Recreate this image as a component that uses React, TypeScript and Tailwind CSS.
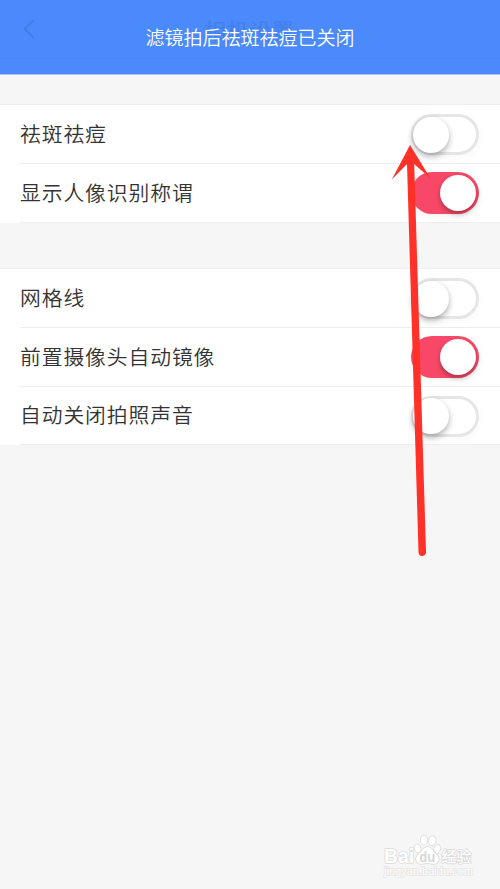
interface SettingRowProps {
  label: string;
  on?: boolean;
}

function Toggle({ on = false }: { on?: boolean }) {
  return (
    <button
      role="switch"
      aria-checked={on}
      className={`flex w-[68px] shrink-0 items-center rounded-full ${
        on
          ? "h-[42px] justify-end bg-[#f74967] pr-[3px] shadow-[0_2px_10px_rgba(0,0,0,0.05)]"
          : "mt-px h-[41px] border-[3px] border-[#e6e6e6] bg-white shadow-[0_2px_10px_rgba(0,0,0,0.03)]"
      }`}
    >
      <span
        className={`size-9 shrink-0 rounded-full bg-white ${
          on ? "shadow-[0_3px_5px_rgba(0,0,0,0.3)]" : "-ml-px shadow-[0_3px_6px_rgba(0,0,0,0.32)]"
        }`}
      />
    </button>
  );
}

function SettingRow({ label, on }: SettingRowProps) {
  return (
    <div className="h-[59px] bg-white pl-5 nth-3:h-[58px]">
      <div className="flex h-full items-center justify-between border-b border-[#ededed] pr-[21px]">
        <span className="-mt-px text-[20.8px] font-[350] tracking-[0.9px] text-[#333]">{label}</span>
        <Toggle on={on} />
      </div>
    </div>
  );
}

function Arrow() {
  return (
    <svg className="absolute left-[385px] top-[140px]" width="50" height="420" viewBox="385 140 50 420">
      <path
        d="M410 145 L430.5 178.5 L414.2 164 L426 551.5 C426.2 554 424.5 556 422 556 C419.8 556 418.7 554.5 418.5 552 L407 164 L391.8 179.5 Z"
        fill="#ff3128"
      />
    </svg>
  );
}

function Watermark() {
  return (
    <div className="absolute left-[380px] top-[832px] w-[98px]">
      <svg width="98" height="48" viewBox="380 832 98 48" fontFamily="'Liberation Sans', 'Noto Sans CJK SC', sans-serif">
        <g fill="#fff" stroke="#dadada" strokeWidth="1.6" paintOrder="stroke" strokeLinejoin="round">
          <text x="384" y="863" fontSize="20.5" fontWeight="700" textLength="30" lengthAdjust="spacingAndGlyphs">
            Bai
          </text>
          <ellipse cx="417.8" cy="848.5" rx="2.8" ry="4" transform="rotate(-12 417.8 848.5)" />
          <ellipse cx="424" cy="840.2" rx="3.3" ry="4.5" />
          <ellipse cx="432.3" cy="840.8" rx="3.3" ry="4.5" transform="rotate(12 432.3 840.8)" />
          <ellipse cx="437.2" cy="848.9" rx="3" ry="4" transform="rotate(18 437.2 848.9)" />
          <path d="M427.3 847c-4 0-5.2 3.8-8 6.4-2.9 2.4-3.7 4.5-3 7.2 1 3.7 4.5 3.6 7.4 3 2.6-.5 4.8-.5 7.5 0 3.3.7 6.5.4 7.5-3 .8-2.8-.9-5-3.4-7.4-2.7-2.6-3.8-6.2-8-6.2Z" />
          <text x="441.5" y="862" fontSize="15" fontWeight="500" textLength="30">
            经验
          </text>
        </g>
        <text x="419.3" y="862.3" fontSize="14" fontWeight="700" fill="#d8d8d8" textLength="16" lengthAdjust="spacingAndGlyphs">
          du
        </text>
        <text
          x="384"
          y="874.5"
          fontSize="10.5"
          fill="#fff"
          stroke="#e4e4e4"
          strokeWidth="1.4"
          paintOrder="stroke"
          textLength="89"
          lengthAdjust="spacingAndGlyphs"
        >
          jingyan.baidu.com
        </text>
      </svg>
    </div>
  );
}

export default function App() {
  return (
    <div className="relative h-[889px] w-[500px] overflow-hidden bg-[#f6f6f6] font-['Noto_Sans_CJK_SC',sans-serif]">
      <header className="relative h-[75px] border-b border-[#a3c4fa] bg-[#4b8afa]">
        <div className="flex h-[59px] items-center border-b border-[#4887f6] pl-[23px]">
          <svg width="12" height="20" viewBox="0 0 12 20" fill="none" stroke="#3e7ae4" strokeWidth="1.5">
            <path d="M11 1 1.5 10 11 19" />
          </svg>
          <h1 className="ml-[169px] text-[22px] tracking-[0.6px] text-[#427fea]">相机设置</h1>
        </div>
        <div className="absolute inset-0 flex items-center justify-center text-[19px] font-[350] text-white">
          滤镜拍后祛斑祛痘已关闭
        </div>
      </header>

      <main className="pt-[29px]">
        <section className="border-t border-[#efefef]">
          <SettingRow label="祛斑祛痘" />
          <SettingRow label="显示人像识别称谓" on />
        </section>
        <section className="mt-[45px] border-t border-[#efefef]">
          <SettingRow label="网格线" />
          <SettingRow label="前置摄像头自动镜像" on />
          <SettingRow label="自动关闭拍照声音" />
        </section>
      </main>

      <Arrow />
      <Watermark />
    </div>
  );
}
